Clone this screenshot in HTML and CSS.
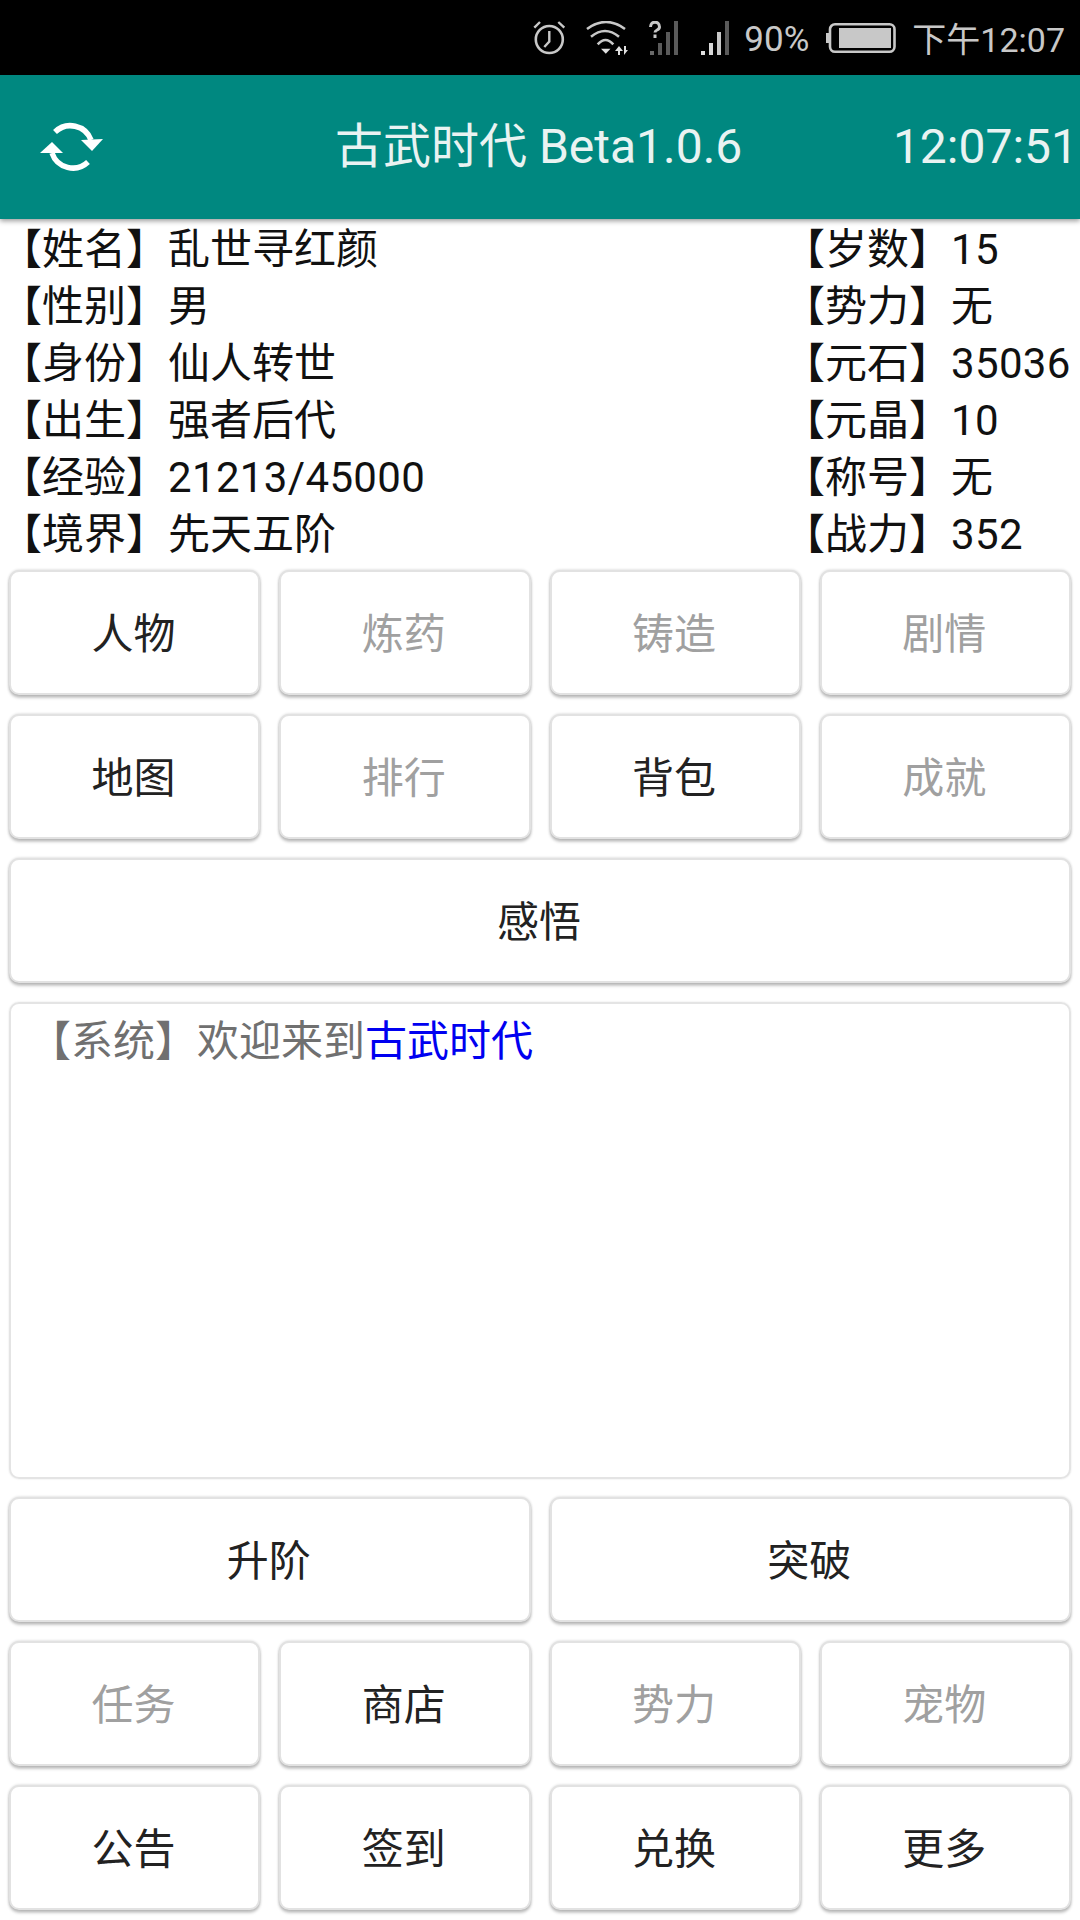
FILE: index.html
```html
<!DOCTYPE html>
<html lang="zh-CN">
<head>
    <meta charset="UTF-8">
    <title>古武时代</title>
    <link rel="stylesheet" href="styles.css">
</head>
<body>
<div class="status-bar">
    <svg class="icon alarm" width="33" height="34" viewBox="0 0 33 34">
        <circle cx="16.3" cy="18.5" r="13.5" fill="none" stroke="#c8c8c8" stroke-width="2.6"/>
        <path d="M16.3 10v10.5l-5 5.5" fill="none" stroke="#c8c8c8" stroke-width="2.4"/>
        <path d="M1.3 6.7 7 1M25.3 1l6 5.7" fill="none" stroke="#c8c8c8" stroke-width="2.4"/>
    </svg>
    <svg class="icon wifi" width="42" height="34" viewBox="0 0 42 34">
        <path d="M1 8Q20-6 39 8" fill="none" stroke="#c8c8c8" stroke-width="2.6"/>
        <path d="M5 15.7Q19 4.300 33 15.700" fill="none" stroke="#c8c8c8" stroke-width="2.6"/>
        <path d="M11.700 23.300Q19.500 14.700 27.300 23.300" fill="none" stroke="#c8c8c8" stroke-width="2.6"/>
        <path d="M15 27.700h9.500l-4.700 5z" fill="#e0e0e0"/>
        <path d="M33 25l-4 5h3v4h2v-4h3z" fill="#e0e0e0"/>
        <path d="M38 25h2v4h2l-4 5z" fill="#e0e0e0"/>
    </svg>
    <svg class="icon sim" width="29" height="34" viewBox="0 0 29 34">
        <path d="M1.500 6C1.500-.5 10.500-.5 10.500 6C10.500 9.500 6 8.500 6 11.500" fill="none" stroke="#c8c8c8" stroke-width="3"/>
        <rect x="4.500" y="13.500" width="3" height="3.500" fill="#c8c8c8"/>
        <rect x="1" y="30" width="4" height="4" fill="#6a6a6a"/>
        <rect x="9" y="22" width="4" height="12" fill="#5a5a5a"/>
        <rect x="17" y="11" width="4" height="23" fill="#5a5a5a"/>
        <rect x="25" y="0" width="4" height="34" fill="#5a5a5a"/>
    </svg>
    <svg class="icon signal" width="28" height="34" viewBox="0 0 28 34">
        <rect x="0" y="30" width="4" height="4" fill="#e0e0e0"/>
        <rect x="8" y="22" width="4" height="12" fill="#d8d8d8"/>
        <rect x="16" y="11" width="4" height="23" fill="#c8c8c8"/>
        <rect x="24" y="0" width="4" height="34" fill="#5a5a5a"/>
    </svg>
    <span class="battery-text">90%</span>
    <svg class="icon battery" width="70" height="30" viewBox="0 0 70 30">
        <rect x="0" y="10" width="3" height="10" fill="#c8c8c8"/>
        <rect x="4" y="1.300" width="64.500" height="27.400" rx="5" fill="none" stroke="#c8c8c8" stroke-width="2.600"/>
        <rect x="13" y="5" width="52" height="20" fill="#c8c8c8"/>
    </svg>
    <span class="clock">下午12:07</span>
</div>

<div class="toolbar">
    <svg class="refresh" width="64" height="50" viewBox="0 0 64 50">
        <path d="M15 10A22 22 0 0 1 51 18" fill="none" stroke="#fff" stroke-width="5.500"/>
        <path d="M41 18l22-1-11 12z" fill="#fff"/>
        <path d="M12 31A22 22 0 0 0 48 40" fill="none" stroke="#fff" stroke-width="5.500"/>
        <path d="M0 31 12 20l11 11z" fill="#fff"/>
    </svg>
    <div class="title">古武时代 Beta1.0.6</div>
    <div class="time">12:07:51</div>
</div>

<div class="info">
    <div class="row"><span class="label">【姓名】</span>乱世寻红颜</div>
    <div class="row"><span class="label">【岁数】</span><span class="num">15</span></div>
    <div class="row"><span class="label">【性别】</span>男</div>
    <div class="row"><span class="label">【势力】</span>无</div>
    <div class="row"><span class="label">【身份】</span>仙人转世</div>
    <div class="row"><span class="label">【元石】</span><span class="num">35036</span></div>
    <div class="row"><span class="label">【出生】</span>强者后代</div>
    <div class="row"><span class="label">【元晶】</span><span class="num">10</span></div>
    <div class="row"><span class="label">【经验】</span><span class="num">21213/45000</span></div>
    <div class="row"><span class="label">【称号】</span>无</div>
    <div class="row"><span class="label">【境界】</span>先天五阶</div>
    <div class="row"><span class="label">【战力】</span><span class="num">352</span></div>
</div>

<div class="panel">
    <div class="btns four">
        <div class="btn">人物</div>
        <div class="btn off">炼药</div>
        <div class="btn off">铸造</div>
        <div class="btn off">剧情</div>
    </div>
    <div class="btns four">
        <div class="btn">地图</div>
        <div class="btn off">排行</div>
        <div class="btn">背包</div>
        <div class="btn off">成就</div>
    </div>
    <div class="btns one">
        <div class="btn">感悟</div>
    </div>
    <div class="log">【系统】欢迎来到<span class="link">古武时代</span></div>
    <div class="btns two">
        <div class="btn">升阶</div>
        <div class="btn">突破</div>
    </div>
    <div class="btns four">
        <div class="btn off">任务</div>
        <div class="btn">商店</div>
        <div class="btn off">势力</div>
        <div class="btn off">宠物</div>
    </div>
    <div class="btns four">
        <div class="btn">公告</div>
        <div class="btn">签到</div>
        <div class="btn">兑换</div>
        <div class="btn">更多</div>
    </div>
</div>
</body>
</html>
```

FILE: styles.css
```css
html, body {
    margin: 0;
    padding: 0;
}
body {
    width: 1080px;
    height: 1920px;
    overflow: hidden;
    background: #fff;
    font: normal 42px/1 Roboto, "Noto Sans CJK SC", sans-serif;
    color: #111;
}
.status-bar {
    height: 75px;
    background: #000;
    color: #c8c8c8;
    display: flex;
    align-items: center;
    justify-content: flex-end;
    padding: 0 15px 0 0;
    box-sizing: border-box;
}
.icon {
    flex: none;
}
.wifi {
    margin-left: 20px;
}
.sim {
    margin-left: 21px;
}
.signal {
    margin-left: 23px;
}
.battery-text {
    font-size: 35px;
    margin-left: 15px;
    margin-top: 4px;
}
.battery {
    margin-left: 17px;
}
.clock {
    font-size: 34px;
    margin-left: 16px;
    margin-top: 4px;
}
.toolbar {
    height: 144px;
    background: #008880;
    color: #e9f3f2;
    display: flex;
    align-items: center;
    position: relative;
    box-shadow: 0 2px 5px rgba(0, 0, 0, .4);
    font-size: 48px;
}
.refresh {
    margin-left: 40px;
    flex: none;
}
.title {
    margin-left: 231px;
    white-space: nowrap;
}
.time {
    margin-left: auto;
    margin-right: 2px;
}
.info {
    display: grid;
    grid-template-columns: 783px 1fr;
    margin-top: 2px;
    height: 344px;
    grid-auto-rows: 57px;
}
.row {
    display: flex;
    align-items: center;
    white-space: nowrap;
}
.label {
    width: 168px;
    flex: none;
}
.num {
    letter-spacing: .35px;
}
.panel {
    display: flex;
    flex-direction: column;
    gap: 19px;
    padding: 5px 9px 0;
}
.btns {
    display: grid;
    gap: 19px;
    height: 125px;
}
.btns.four {
    grid-template-columns: repeat(4, 1fr);
}
.btns.two {
    grid-template-columns: repeat(2, 1fr);
}
.btns.one {
    grid-template-columns: 1fr;
}
.btn {
    display: flex;
    align-items: center;
    justify-content: center;
    padding: 5px 2px 0 0;
    border: 2px solid #e2e2e2;
    border-radius: 10px;
    background: #fff;
    box-shadow: 0 0 3px rgba(0, 0, 0, .2), 0 3px 3px rgba(0, 0, 0, .22);
    color: #222;
}
.btn.off {
    color: #a0a0a0;
}
.log {
    height: 477px;
    margin-bottom: -1px;
    box-sizing: border-box;
    border: 2px solid #e4e4e4;
    border-radius: 10px;
    box-shadow: 0 0 2px rgba(0, 0, 0, .12);
    padding: 17px 0 0 18px;
    color: #707070;
}
.link {
    color: #0000f0;
}
```
